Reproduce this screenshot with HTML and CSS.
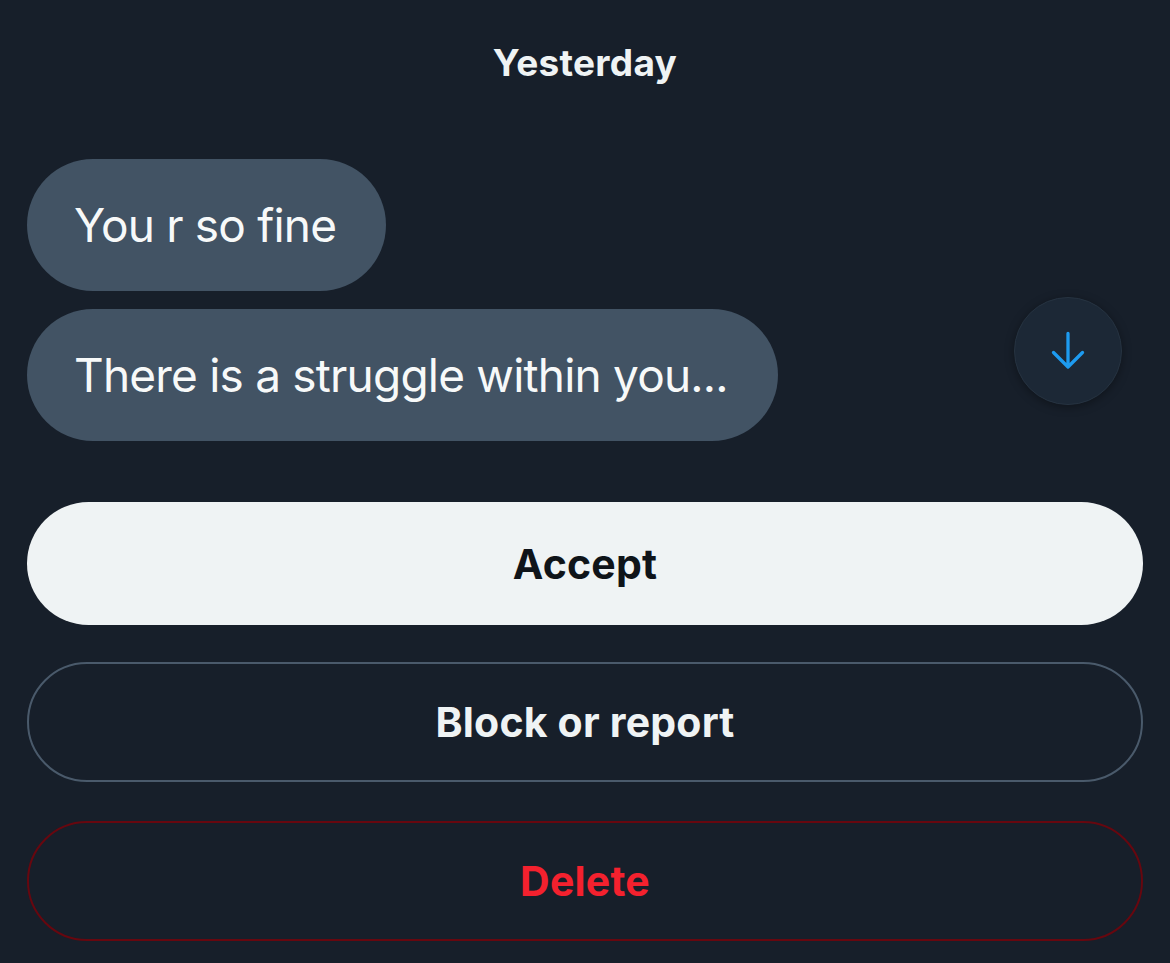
FILE: index.html
```html
<!DOCTYPE html>
<html lang="en">
<head>
<meta charset="utf-8">
<title>Message request</title>
<link rel="stylesheet" href="styles.css">
</head>
<body>
<main class="screen">
  <div class="day">Yesterday</div>
  <div class="messages">
    <div class="bubble">You r so fine</div>
    <div class="row">
      <div class="bubble">There is a struggle within you...</div>
      <button class="scroll-down" aria-label="Scroll to bottom">
        <svg viewBox="0 0 40 40" width="40" height="40"><path d="M20 2.5v33M5.5 21.5L20 36l14.5-14.5" fill="none" stroke="#1d9bf0" stroke-width="3.3" stroke-linecap="round" stroke-linejoin="round"/></svg>
      </button>
    </div>
  </div>
  <div class="actions">
    <button class="btn btn-accept">Accept</button>
    <button class="btn btn-outline">Block or report</button>
    <button class="btn btn-delete">Delete</button>
  </div>
</main>
</body>
</html>
```
FILE: styles.css
```css
html, body {
  margin: 0;
  padding: 0;
  background: #171f2a;
}
.screen {
  width: 1170px;
  height: 963px;
  box-sizing: border-box;
  padding: 0 27px;
  font-family: Inter, "Noto Sans", sans-serif;
  color: #eff3f4;
  display: flex;
  flex-direction: column;
  overflow: hidden;
}
.day {
  height: 159px;
  box-sizing: border-box;
  padding-top: 39px;
  text-align: center;
  font-size: 37px;
  font-weight: 700;
  line-height: 48px;
  letter-spacing: 0.3px;
}
.messages {
  display: flex;
  flex-direction: column;
  align-items: flex-start;
  gap: 18px;
}
.row {
  position: relative;
  width: 100%;
}
.bubble {
  display: inline-flex;
  align-items: center;
  height: 132px;
  box-sizing: border-box;
  padding: 0 50px 0 47px;
  background: #425364;
  border-radius: 66px;
  font-size: 46px;
  font-weight: 400;
  color: #f7f9f9;
  letter-spacing: -0.8px;
}
.scroll-down {
  position: absolute;
  right: 21px;
  top: -12px;
  width: 108px;
  height: 108px;
  border-radius: 50%;
  background: #1c2836;
  border: 1px solid #263341;
  box-shadow: 0 2px 10px rgba(0,0,0,0.35);
  display: flex;
  align-items: center;
  justify-content: center;
  padding: 0;
}
.actions {
  display: flex;
  flex-direction: column;
  margin-top: 61px;
}
.btn {
  width: 100%;
  border-radius: 62px;
  font-family: Inter, "Noto Sans", sans-serif;
  font-size: 41px;
  font-weight: 700;
  letter-spacing: 0.2px;
  display: flex;
  align-items: center;
  justify-content: center;
  padding: 0;
  box-sizing: border-box;
}
.btn-accept {
  height: 123px;
  background: #eff3f4;
  color: #0f1419;
  border: none;
}
.btn-outline {
  height: 120px;
  margin-top: 37px;
  background: transparent;
  border: 2px solid #4a5a6b;
  color: #eff3f4;
}
.btn-delete {
  height: 120px;
  margin-top: 39px;
  background: transparent;
  border: 2px solid #67070f;
  color: #f4212e;
}
```
